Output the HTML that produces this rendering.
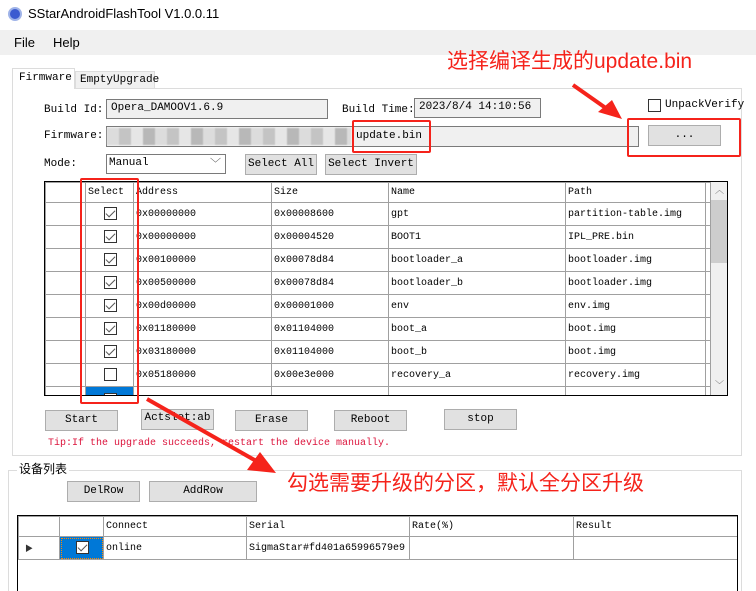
<!DOCTYPE html>
<html><head><meta charset="utf-8"><style>
*{margin:0;padding:0;box-sizing:border-box}
html,body{width:756px;height:591px;overflow:hidden}
body{background:#fff;position:relative;font-family:"Liberation Mono","Noto Serif CJK SC",monospace;font-size:10px;color:#000}
.a{position:absolute}
.btn{position:absolute;background:#e1e1e1;border:1px solid #adadad;text-align:center;font-size:11px;line-height:19px}
.inp{position:absolute;background:#f0f0f0;border:1px solid #7a7a7a;font-size:11px;padding-left:4px;line-height:17px}
.lbl{position:absolute;font-size:11px}
.red{position:absolute;border:2px solid #f5231b;border-radius:2px}
table{border-collapse:collapse;position:absolute;table-layout:fixed}
td{border:1px solid #a0a0a0;font-size:10px;padding-left:2px;white-space:nowrap;overflow:hidden;height:23px}
.cb{display:inline-block;width:13px;height:13px;border:1px solid #333;background:#fff;vertical-align:middle;position:relative}
.cb.k::after{content:"";position:absolute;left:3px;top:0px;width:4px;height:8px;border:solid #555;border-width:0 1.5px 1.5px 0;transform:rotate(45deg)}
.cn{font-family:"Noto Sans CJK SC",sans-serif;color:#f5231b}
</style></head><body>
<div class="a" style="left:8px;top:7px;width:14px;height:14px;border-radius:50%;background:#3b5bd0;border:2px solid #9fb3e8"></div>
<div class="a" style="left:28px;top:6px;font-family:'Liberation Sans',sans-serif;font-size:13px">SStarAndroidFlashTool V1.0.0.11</div>
<div class="a" style="left:0;top:30px;width:756px;height:25px;background:#f0f0f0"></div>
<div class="a" style="left:14px;top:35px;font-family:'Liberation Sans',sans-serif;font-size:13px">File</div>
<div class="a" style="left:53px;top:35px;font-family:'Liberation Sans',sans-serif;font-size:13px">Help</div>
<div class="a" style="left:12px;top:88px;width:730px;height:368px;border:1px solid #dcdcdc"></div>
<div class="a" style="left:12px;top:68px;width:63px;height:21px;border:1px solid #dcdcdc;border-bottom:none;background:#fff;font-size:11px;padding:3px 0 0 6px">Firmware</div>
<div class="a" style="left:75px;top:71px;width:80px;height:18px;border:1px solid #dcdcdc;background:#f0f0f0;font-size:11px;padding:2px 0 0 4px">EmptyUpgrade</div>
<div class="lbl" style="left:44px;top:104px">Build Id:</div>
<div class="inp" style="left:106px;top:99px;width:222px;height:20px">Opera_DAMOOV1.6.9</div>
<div class="lbl" style="left:342px;top:104px">Build Time:</div>
<div class="inp" style="left:414px;top:98px;width:127px;height:20px">2023/8/4 14:10:56</div>
<div class="a" style="left:648px;top:99px;width:13px;height:13px;border:1px solid #333"></div>
<div class="lbl" style="left:665px;top:99px">UnpackVerify</div>
<div class="lbl" style="left:44px;top:130px">Firmware:</div>
<div class="inp" style="left:106px;top:126px;width:533px;height:21px;line-height:18px;padding-left:249px">update.bin</div>
<div class="a" style="left:107px;top:128px;width:244px;height:17px;background:repeating-linear-gradient(90deg,#dcdcdc 0 12px,#c4c4c4 12px 24px,#e6e6e6 24px 36px,#b8b8b8 36px 48px);filter:blur(0.6px)"></div>
<div class="btn" style="left:648px;top:125px;width:73px;height:21px">...</div>
<div class="lbl" style="left:44px;top:158px">Mode:</div>
<div class="a" style="left:106px;top:154px;width:120px;height:20px;border:1px solid #7a7a7a;font-size:11px;padding:2px 0 0 2px">Manual<span style="position:absolute;right:4px;top:0px;color:#555">﹀</span></div>
<div class="btn" style="left:245px;top:154px;width:72px;height:21px">Select All</div>
<div class="btn" style="left:325px;top:154px;width:92px;height:21px">Select Invert</div>
<div class="a" style="left:44px;top:181px;width:684px;height:215px;border:1px solid #000;overflow:hidden;background:#fff">
<table style="left:0;top:0;width:665px">
<colgroup><col style="width:40px"><col style="width:48px"><col style="width:138px"><col style="width:117px"><col style="width:177px"><col style="width:140px"><col style="width:5px"></colgroup>
<tr style="height:20px"><td style="height:20px"></td><td style="height:20px">Select</td><td style="height:20px">Address</td><td style="height:20px">Size</td><td style="height:20px">Name</td><td style="height:20px">Path</td><td style="height:20px"></td></tr>
<tr><td></td><td style="text-align:center"><span class="cb k"></span></td><td>0x00000000</td><td>0x00008600</td><td>gpt</td><td>partition-table.img</td><td></td></tr>
<tr><td></td><td style="text-align:center"><span class="cb k"></span></td><td>0x00000000</td><td>0x00004520</td><td>BOOT1</td><td>IPL_PRE.bin</td><td></td></tr>
<tr><td></td><td style="text-align:center"><span class="cb k"></span></td><td>0x00100000</td><td>0x00078d84</td><td>bootloader_a</td><td>bootloader.img</td><td></td></tr>
<tr><td></td><td style="text-align:center"><span class="cb k"></span></td><td>0x00500000</td><td>0x00078d84</td><td>bootloader_b</td><td>bootloader.img</td><td></td></tr>
<tr><td></td><td style="text-align:center"><span class="cb k"></span></td><td>0x00d00000</td><td>0x00001000</td><td>env</td><td>env.img</td><td></td></tr>
<tr><td></td><td style="text-align:center"><span class="cb k"></span></td><td>0x01180000</td><td>0x01104000</td><td>boot_a</td><td>boot.img</td><td></td></tr>
<tr><td></td><td style="text-align:center"><span class="cb k"></span></td><td>0x03180000</td><td>0x01104000</td><td>boot_b</td><td>boot.img</td><td></td></tr>
<tr><td></td><td style="text-align:center"><span class="cb"></span></td><td>0x05180000</td><td>0x00e3e000</td><td>recovery_a</td><td>recovery.img</td><td></td></tr>
<tr><td></td><td style="background:#0078d7;text-align:center;vertical-align:top;padding-top:6px"><span class="cb"></span></td><td></td><td></td><td></td><td></td><td></td></tr>
</table>
<div class="a" style="left:666px;top:0;width:17px;height:213px;background:#f0f0f0"></div>
<div class="a" style="left:666px;top:18px;width:17px;height:63px;background:#cdcdcd"></div>
<div class="a" style="left:670px;top:1px;font-size:9px;color:#606060">︿</div>
<div class="a" style="left:670px;top:196px;font-size:9px;color:#606060">﹀</div>
</div>
<div class="red" style="left:80px;top:178px;width:59px;height:226px"></div>
<div class="red" style="left:352px;top:120px;width:79px;height:33px"></div>
<div class="red" style="left:627px;top:118px;width:114px;height:39px"></div>
<div class="btn" style="left:45px;top:410px;width:73px;height:21px">Start</div>
<div class="btn" style="left:141px;top:409px;width:73px;height:21px;line-height:17px">Actslot:ab</div>
<div class="btn" style="left:235px;top:410px;width:73px;height:21px">Erase</div>
<div class="btn" style="left:334px;top:410px;width:73px;height:21px">Reboot</div>
<div class="btn" style="left:444px;top:409px;width:73px;height:21px">stop</div>
<div class="a" style="left:48px;top:438px;color:#dc143c;font-size:10px">Tip:If the upgrade succeeds, restart the device manually.</div>
<div class="a" style="left:8px;top:470px;width:734px;height:121px;border:1px solid #dcdcdc;border-bottom:none"></div>
<div class="a" style="left:17px;top:461px;background:#fff;padding:0 2px;font-family:'Noto Sans CJK SC',sans-serif;font-size:12px;line-height:16px">设备列表</div>
<div class="btn" style="left:67px;top:481px;width:73px;height:21px">DelRow</div>
<div class="btn" style="left:149px;top:481px;width:108px;height:21px">AddRow</div>
<div class="a" style="left:17px;top:515px;width:721px;height:76px;border:1px solid #000;border-bottom:none;overflow:hidden">
<table style="left:0;top:0;width:719px">
<colgroup><col style="width:41px"><col style="width:44px"><col style="width:143px"><col style="width:163px"><col style="width:164px"><col style="width:164px"></colgroup>
<tr><td style="height:20px"></td><td style="height:20px"></td><td style="height:20px">Connect</td><td style="height:20px">Serial</td><td style="height:20px">Rate(%)</td><td style="height:20px">Result</td></tr>
<tr><td style="padding-left:6px;font-size:8px;color:#333">▶</td><td style="background:#0078d7;text-align:center;outline:1px dotted #f80;outline-offset:-2px"><span class="cb k"></span></td><td>online</td><td>SigmaStar#fd401a65996579e9</td><td></td><td></td></tr>
</table></div>
<div class="a cn" style="left:447px;top:46px;font-size:21px;line-height:28px;white-space:nowrap">选择编译生成的<span style="font-family:'Liberation Sans',sans-serif">update.bin</span></div>
<div class="a cn" style="left:287px;top:468px;font-size:21px;line-height:28px;white-space:nowrap">勾选需要升级的分区，默认全分区升级</div>
<svg class="a" style="left:0;top:0" width="756" height="591">
<line x1="573" y1="85" x2="610" y2="111" stroke="#f5231b" stroke-width="4"/>
<polygon points="622,119 598,112 612,100" fill="#f5231b"/>
<line x1="147" y1="399" x2="258" y2="462" stroke="#f5231b" stroke-width="4"/>
<polygon points="276,473 247,470 260,452" fill="#f5231b"/>
</svg>
</body></html>
